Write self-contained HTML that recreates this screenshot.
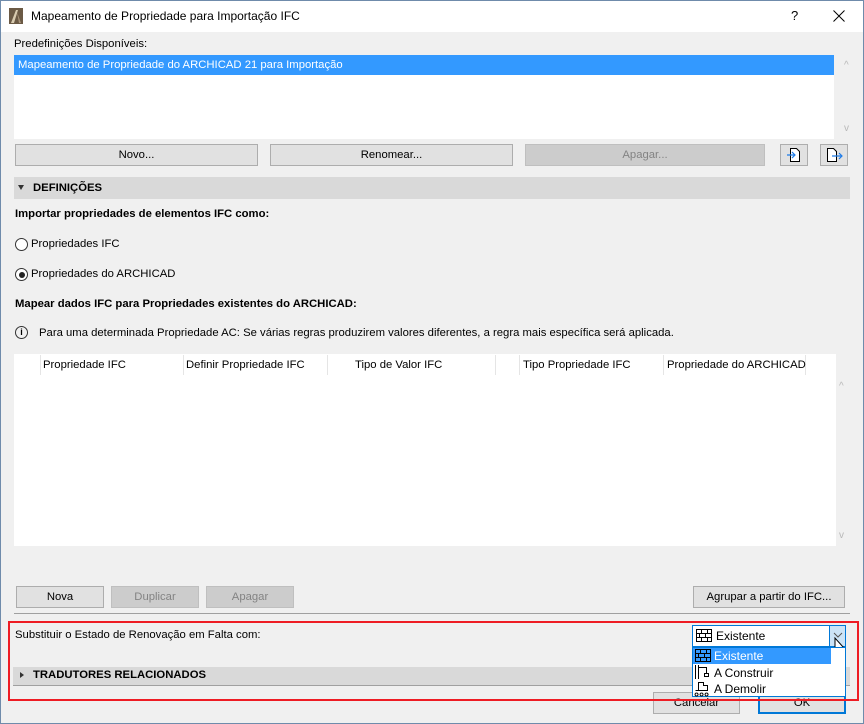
<!DOCTYPE html>
<html><head><meta charset="utf-8"><style>
*{box-sizing:border-box;margin:0;padding:0}
body{width:864px;height:724px;overflow:hidden;background:#f0f0f0;font-family:"Liberation Sans",sans-serif;font-size:11.3px;color:#000;position:relative}
.a{position:absolute}
.win{left:0;top:0;width:864px;height:724px;border:1px solid #6f8bab}
.btn{position:absolute;background:#e1e1e1;border:1px solid #adadad;text-align:center;line-height:20px}
.dis{background:#cccccc;border-color:#bfbfbf;color:#838383}
.bar{position:absolute;background:#d9d9d9;font-weight:bold;line-height:22px}
.b{font-weight:bold}
.sep{position:absolute;top:355px;width:1px;height:20px;background:#e5e5e5}
.th{position:absolute;top:359px}
.sc{position:absolute;color:#b8b8b8;font-size:10px}
</style></head><body>
<div class="a win"></div>
<div class="a" style="left:1px;top:1px;width:862px;height:31px;background:#fff"></div>
<svg class="a" style="left:9px;top:8px" width="14" height="16"><rect width="14" height="16" fill="#6b5a45"/><path d="M2 15 L7 2 L9 2 L5 15Z" fill="#d8cbb0"/><path d="M8 4 L12 15 L10 15Z" fill="#a8947a"/></svg>
<div class="a" style="left:31px;top:9px;font-size:12px">Mapeamento de Propriedade para Importação IFC</div>
<div class="a" style="left:791px;top:8px;font-size:13px">?</div>
<svg class="a" style="left:833px;top:10px" width="12" height="12"><path d="M0.5 0.5l11 11M11.5 0.5l-11 11" stroke="#000" stroke-width="1"/></svg>

<div class="a" style="left:14px;top:38px">Predefinições Disponíveis:</div>
<div class="a" style="left:14px;top:55px;width:820px;height:84px;background:#fff"></div>
<div class="a" style="left:14px;top:55px;width:820px;height:20px;background:#3399ff;color:#fff;padding-left:4px;line-height:20px">Mapeamento de Propriedade do ARCHICAD 21 para Importação</div>
<div class="sc" style="left:844px;top:60px">^</div>
<div class="sc" style="left:844px;top:123px">v</div>
<div class="btn" style="left:15px;top:144px;width:243px;height:22px">Novo...</div>
<div class="btn" style="left:270px;top:144px;width:243px;height:22px">Renomear...</div>
<div class="btn dis" style="left:525px;top:144px;width:240px;height:22px">Apagar...</div>
<div class="btn" style="left:780px;top:144px;width:28px;height:22px"></div>
<div class="btn" style="left:820px;top:144px;width:28px;height:22px"></div>
<svg class="a" style="left:786px;top:147px" width="16" height="16"><path d="M4.5 1.5h6l3 3v10h-9z" fill="#fff" stroke="#000"/><path d="M1 8h8M6 5l3 3-3 3" stroke="#1e7be8" fill="none" stroke-width="1.2"/></svg>
<svg class="a" style="left:826px;top:147px" width="18" height="16"><path d="M1.5 1.5h6l3 3v10h-9z" fill="#fff" stroke="#000"/><path d="M6 9h10M13 6l3 3-3 3" stroke="#1e7be8" fill="none" stroke-width="1.2"/></svg>

<div class="bar" style="left:14px;top:177px;width:836px;height:22px;padding-left:19px">DEFINIÇÕES</div>
<div class="a" style="left:18px;top:185px;width:0;height:0;border-left:3px solid transparent;border-right:3px solid transparent;border-top:5px solid #333"></div>

<div class="a b" style="left:15px;top:208px">Importar propriedades de elementos IFC como:</div>
<div class="a" style="left:15px;top:238px;width:13px;height:13px;border:1px solid #333;border-radius:50%;background:#fff"></div>
<div class="a" style="left:31px;top:238px">Propriedades IFC</div>
<div class="a" style="left:15px;top:268px;width:13px;height:13px;border:1px solid #333;border-radius:50%;background:#fff"></div>
<div class="a" style="left:18.5px;top:271.5px;width:6px;height:6px;border-radius:50%;background:#222"></div>
<div class="a" style="left:31px;top:268px">Propriedades do ARCHICAD</div>
<div class="a b" style="left:15px;top:298px">Mapear dados IFC para Propriedades existentes do ARCHICAD:</div>
<div class="a" style="left:15px;top:326px;width:13px;height:13px;border:1px solid #333;border-radius:50%;font-size:9px;line-height:11px;text-align:center;font-weight:bold">i</div>
<div class="a" style="left:39px;top:327px">Para uma determinada Propriedade AC: Se várias regras produzirem valores diferentes, a regra mais específica será aplicada.</div>

<div class="a" style="left:14px;top:354px;width:822px;height:192px;background:#fff"></div>
<div class="sep" style="left:40px"></div><div class="sep" style="left:183px"></div><div class="sep" style="left:327px"></div><div class="sep" style="left:495px"></div><div class="sep" style="left:519px"></div><div class="sep" style="left:663px"></div><div class="sep" style="left:805px"></div>
<div class="th" style="left:43px">Propriedade IFC</div>
<div class="th" style="left:186px">Definir Propriedade IFC</div>
<div class="th" style="left:355px">Tipo de Valor IFC</div>
<div class="th" style="left:523px">Tipo Propriedade IFC</div>
<div class="th" style="left:667px">Propriedade do ARCHICAD</div>
<div class="sc" style="left:839px;top:381px">^</div>
<div class="sc" style="left:839px;top:530px">v</div>

<div class="btn" style="left:16px;top:586px;width:88px;height:22px">Nova</div>
<div class="btn dis" style="left:111px;top:586px;width:88px;height:22px">Duplicar</div>
<div class="btn dis" style="left:206px;top:586px;width:88px;height:22px">Apagar</div>
<div class="btn" style="left:693px;top:586px;width:152px;height:22px">Agrupar a partir do IFC...</div>
<div class="a" style="left:14px;top:613px;width:836px;height:1px;background:#a0a0a0"></div>

<div class="a" style="left:15px;top:629px">Substituir o Estado de Renovação em Falta com:</div>
<div class="bar" style="left:13px;top:667px;width:837px;height:18px;line-height:17px;padding-left:20px">TRADUTORES RELACIONADOS</div>
<div class="a" style="left:20px;top:672px;width:0;height:0;border-top:3px solid transparent;border-bottom:3px solid transparent;border-left:4px solid #333"></div>
<div class="a" style="left:13px;top:685px;width:837px;height:1px;background:#a0a0a0"></div>
<div class="btn" style="left:653px;top:692px;width:87px;height:22px">Cancelar</div>
<div class="btn" style="left:758px;top:692px;width:88px;height:22px;border:2px solid #0078d7;line-height:18px">OK</div>
<div class="a" style="left:8px;top:621px;width:851px;height:80px;border:2px solid #ee1c24"></div>

<div class="a" style="left:692px;top:625px;width:154px;height:22px;background:#fff;border:1px solid #0078d7"></div>
<div class="a" style="left:829px;top:626px;width:16px;height:20px;background:#cce4f7;border-left:1px solid #0078d7"></div>
<svg class="a" style="left:695px;top:628px" width="18" height="15"><g fill="none" stroke="#000"><rect x="1.5" y="1.5" width="15" height="12"/><path d="M1.5 5.5h15M1.5 9.5h15M6.5 1.5v4M12.5 1.5v4M4.5 5.5v4M10.5 5.5v4M6.5 9.5v4M12.5 9.5v4"/></g></svg>
<div class="a" style="left:716px;top:629px;font-size:12px">Existente</div>
<svg class="a" style="left:832px;top:628px" width="16" height="30"><path d="M2 5l4 4 4-4" stroke="#555" fill="none"/><path d="M3 10v14l3-3 2 5 2-1-2-5h4z" fill="#fff" stroke="#000"/></svg>
<div class="a" style="left:692px;top:647px;width:154px;height:50px;background:#fff;border:1px solid #0078d7"></div>
<div class="a" style="left:693px;top:648px;width:138px;height:16px;background:#3399ff"></div>
<svg class="a" style="left:694px;top:648px" width="18" height="15"><g fill="none" stroke="#000"><rect x="1.5" y="1.5" width="15" height="12"/><path d="M1.5 5.5h15M1.5 9.5h15M6.5 1.5v4M12.5 1.5v4M4.5 5.5v4M10.5 5.5v4M6.5 9.5v4M12.5 9.5v4"/></g></svg>
<div class="a" style="left:714px;top:649px;color:#fff;font-size:12px">Existente</div>
<svg class="a" style="left:694px;top:664px" width="18" height="33"><g fill="none" stroke="#000"><path d="M1.5 1v14M4.5 1v14M4.5 3.5h8v6M10.5 9.5h4v3h-4z"/><path d="M1.5 26.5h12v-5h-4v-3h-5v8M2.5 29a1.5 1.5 0 1 0 .1 0M7.5 29a1.5 1.5 0 1 0 .1 0M12.5 29a1.5 1.5 0 1 0 .1 0"/></g></svg>
<div class="a" style="left:714px;top:666px;font-size:12px">A Construir</div>
<div class="a" style="left:714px;top:682px;font-size:12px">A Demolir</div>
</body></html>
